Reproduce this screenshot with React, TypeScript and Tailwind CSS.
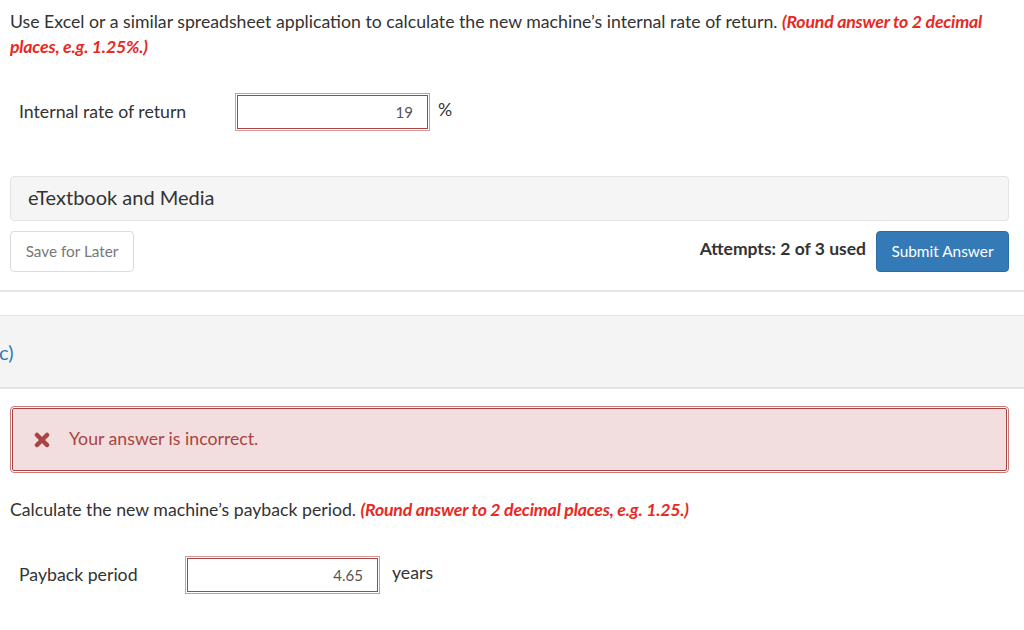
import React from "react";

const font = { fontFamily: "Lato, 'Noto Sans', sans-serif" };

function AnswerBox({ value, width }: { value: string; width: string }) {
  return (
    <div className={`${width} h-[38px] border border-[#d49a9a] p-px`}>
      <div className="h-full border border-[#a94442] bg-white flex items-center justify-end pr-[14px] text-[15px] text-[#555]">
        {value}
      </div>
    </div>
  );
}

export default function App() {
  return (
    <div className="w-[1024px] h-[630px] overflow-hidden bg-white text-[#333]" style={font}>
      <div className="pl-[10px] pr-[15px] pt-[9px]">
        <p className="text-[17.7px] leading-[25px] text-[#333]">
          Use Excel or a similar spreadsheet application to calculate the new machine’s internal rate of return.{" "}
          <span className="font-bold italic text-[#e8291f] tracking-[-0.2px]">
            (Round answer to 2 decimal places, e.g. 1.25%.)
          </span>
        </p>

        <div className="flex items-center mt-[34px] pl-[9px] h-[38px]">
          <span className="w-[216px] text-[17.7px]">Internal rate of return</span>
          <AnswerBox value="19" width="w-[195px]" />
          <span className="ml-[8px] text-[17.7px] -mt-[4px]">%</span>
        </div>

        <div className="mt-[45px] h-[45px] rounded-[4px] border border-[#e3e3e3] bg-[#f5f5f5] flex items-center pl-[17px] text-[20px] text-[#333]">
          <span className="-mt-[3px]">eTextbook and Media</span>
        </div>

        <div className="mt-[10px] flex items-center">
          <button className="h-[41px] w-[124px] rounded-[4px] border border-[#dcdcdc] bg-white text-[15.3px] text-[#777]">
            Save for Later
          </button>
          <div className="flex-1" />
          <span className="font-bold text-[17.5px] text-[#333] mr-[10px] -mt-[4px]">Attempts: 2 of 3 used</span>
          <button className="h-[41px] w-[133px] rounded-[4px] bg-[#337ab7] border border-[#2e6da4] text-white text-[15.4px]">
            Submit Answer
          </button>
        </div>
      </div>

      <div className="mt-[18px] h-[2px] bg-[#e6e6e6]" />

      <div className="mt-[23px] h-[74px] bg-[#f4f4f4] border-t border-b-2 border-[#e3e3e3] flex items-center">
        <span className="-ml-[1px] text-[20px] text-[#2f7ab8]">c)</span>
      </div>

      <div className="pl-[10px] pr-[15px]">
        <div className="mt-[17px] h-[67px] rounded-[4px] border border-[#c57a78] p-px">
          <div className="h-full border border-[#a94442] bg-[#f2dede] flex items-center pl-[21px] rounded-[2px]">
            <svg width="16" height="16" viewBox="0 0 16 16" className="mr-[19px]">
              <path d="M3 3 L13 13 M13 3 L3 13" stroke="#a94442" strokeWidth="4.5" strokeLinecap="round" />
            </svg>
            <span className="text-[17.7px] text-[#a94442]">Your answer is incorrect.</span>
          </div>
        </div>

        <p className="mt-[24px] text-[17.7px] leading-[25px] text-[#333]">
          Calculate the new machine’s payback period.{" "}
          <span className="font-bold italic text-[#e8291f] tracking-[-0.2px]">
            (Round answer to 2 decimal places, e.g. 1.25.)
          </span>
        </p>

        <div className="flex items-center mt-[34px] pl-[9px] h-[38px]">
          <span className="w-[166px] text-[17.7px]">Payback period</span>
          <AnswerBox value="4.65" width="w-[195px]" />
          <span className="ml-[12px] text-[17.7px] -mt-[4px]">years</span>
        </div>
      </div>
    </div>
  );
}
